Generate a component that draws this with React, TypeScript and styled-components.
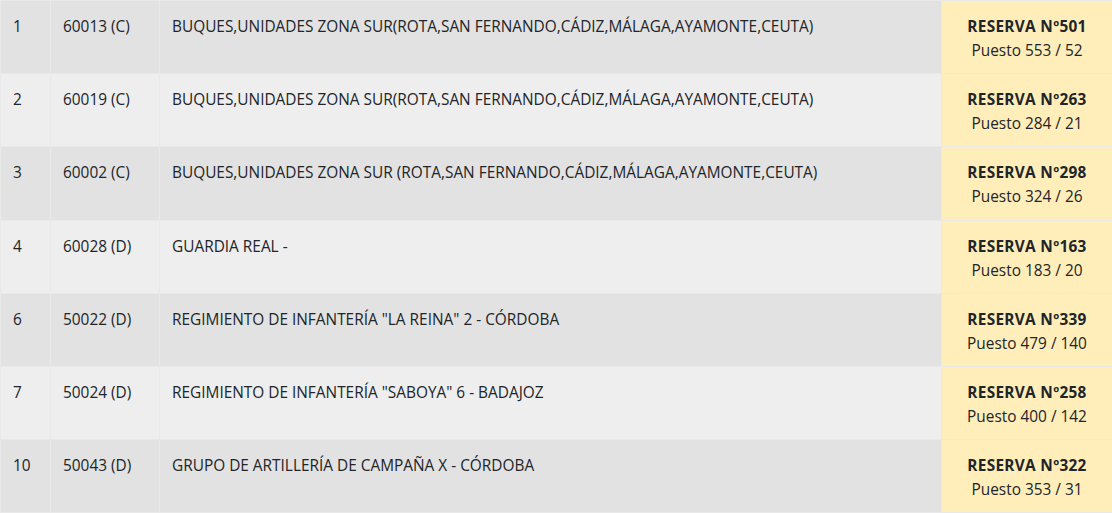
import React from "react";
import styled, { createGlobalStyle } from "styled-components";

const Global = createGlobalStyle`
  html, body { margin: 0; padding: 0; background: #ffffff; }
  body { font-family: "Open Sans", "Segoe UI", sans-serif; color: #212529; }
`;

const Table = styled.table`
  width: 1112px;
  border-collapse: collapse;
  table-layout: fixed;
  font-size: 15.4px;
  line-height: 24px;
  color: #212529;
`;

const Col = styled.col<{ $w: number }>`
  width: ${(p) => p.$w}px;
`;

const Row = styled.tr<{ $odd: boolean }>`
  background: ${(p) => (p.$odd ? "#e2e2e2" : "#eeeeee")};
`;

const Cell = styled.td`
  border: 1px solid #e9e9e9;
  padding: 14px 12px 10.2px;
  vertical-align: top;
  height: 48px;
`;

const ReserveCell = styled(Cell)`
  background: #ffeeba;
  text-align: center;
`;

const Strong = styled.div`
  font-weight: 700;
  letter-spacing: 0.3px;
`;

type R = { n: string; code: string; name: string; res: string; puesto: string };

const rows: R[] = [
  { n: "1", code: "60013 (C)", name: "BUQUES,UNIDADES ZONA SUR(ROTA,SAN FERNANDO,CÁDIZ,MÁLAGA,AYAMONTE,CEUTA)", res: "501", puesto: "553 / 52" },
  { n: "2", code: "60019 (C)", name: "BUQUES,UNIDADES ZONA SUR(ROTA,SAN FERNANDO,CÁDIZ,MÁLAGA,AYAMONTE,CEUTA)", res: "263", puesto: "284 / 21" },
  { n: "3", code: "60002 (C)", name: "BUQUES,UNIDADES ZONA SUR (ROTA,SAN FERNANDO,CÁDIZ,MÁLAGA,AYAMONTE,CEUTA)", res: "298", puesto: "324 / 26" },
  { n: "4", code: "60028 (D)", name: "GUARDIA REAL -", res: "163", puesto: "183 / 20" },
  { n: "6", code: "50022 (D)", name: "REGIMIENTO DE INFANTERÍA \"LA REINA\" 2 - CÓRDOBA", res: "339", puesto: "479 / 140" },
  { n: "7", code: "50024 (D)", name: "REGIMIENTO DE INFANTERÍA \"SABOYA\" 6 - BADAJOZ", res: "258", puesto: "400 / 142" },
  { n: "10", code: "50043 (D)", name: "GRUPO DE ARTILLERÍA DE CAMPAÑA X - CÓRDOBA", res: "322", puesto: "353 / 31" },
];

export default function App() {
  return (
    <>
      <Global />
      <Table>
        <colgroup>
          <Col $w={50} />
          <Col $w={109} />
          <Col $w={782} />
          <Col $w={171} />
        </colgroup>
        <tbody>
          {rows.map((r, i) => (
            <Row key={r.n} $odd={i % 2 === 0}>
              <Cell>{r.n}</Cell>
              <Cell>{r.code}</Cell>
              <Cell>{r.name}</Cell>
              <ReserveCell>
                <Strong>RESERVA Nº{r.res}</Strong>
                <div>Puesto {r.puesto}</div>
              </ReserveCell>
            </Row>
          ))}
        </tbody>
      </Table>
    </>
  );
}
